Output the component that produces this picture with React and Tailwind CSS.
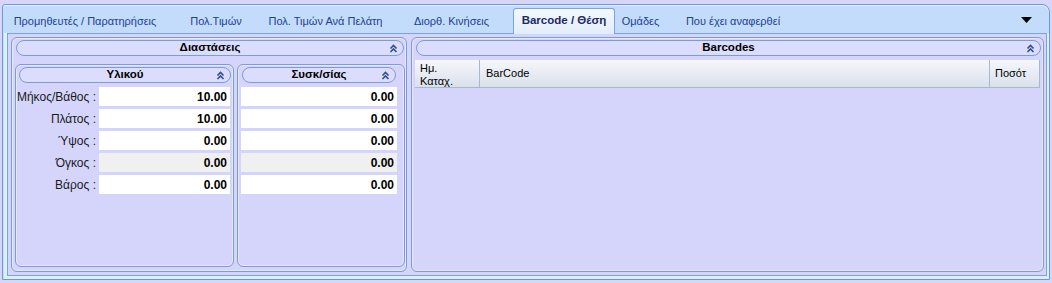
import React from "react";

const font = { fontFamily: '"Liberation Sans", Arial, sans-serif' };

function Chevrons() {
  return (
    <svg width="9" height="9" viewBox="0 0 9 9" className="shrink-0">
      <path d="M1.5 4.5 L4.5 1.5 L7.5 4.5" fill="none" stroke="#2f4f8f" strokeWidth="1.6" />
      <path d="M1.5 8 L4.5 5 L7.5 8" fill="none" stroke="#2f4f8f" strokeWidth="1.6" />
    </svg>
  );
}

function Pill({ title, className = "" }) {
  return (
    <div
      className={`h-[16px] rounded-full border border-[#7c9cd4] bg-[#dcdcfc] flex items-center relative ${className}`}
    >
      <div className="flex-1 text-center text-[11.5px] font-bold text-black leading-none">{title}</div>
      <div className="absolute right-[5px] top-[3px]">
        <Chevrons />
      </div>
    </div>
  );
}

const tabs = [
  { t: "Προμηθευτές / Παρατηρήσεις", w: "w-[162px]" },
  { t: "Πολ.Τιμών", w: "w-[100px]" },
  { t: "Πολ. Τιμών Ανά Πελάτη", w: "w-[119px] mr-[5px]" },
  { t: "Διορθ. Κινήσεις", w: "w-[123px]" },
  { t: "Barcode / Θέση", w: "w-[102px]", sel: true },
  { t: "Ομάδες", w: "w-[51px]" },
  { t: "Που έχει αναφερθεί", w: "w-[134px]" },
];

const labels = ["Μήκος/Βάθος :", "Πλάτος :", "Ύψος :", "Όγκος :", "Βάρος :"];
const v1 = ["10.00", "10.00", "0.00", "0.00", "0.00"];
const v2 = ["0.00", "0.00", "0.00", "0.00", "0.00"];

export default function App() {
  return (
    <div
      style={font}
      className="w-[1052px] h-[283px] bg-[#d6d6f8] pt-[4px] px-[2px] overflow-hidden"
    >
      <div className="h-[276px] border border-[#6f98d8] rounded-tr-[8px] rounded-tl-[3px] bg-[#c4dcfc] flex flex-col shadow-[inset_0_1px_0_#e8f2ff]">
        {/* tab strip */}
        <div className="h-[28px] flex items-end pl-[1px] shrink-0">
          {tabs.map((tab) =>
            tab.sel ? (
              <div
                key={tab.t}
                className={`${tab.w} h-[26px] -mb-[1px] relative z-10 rounded-t-[3px] border border-b-0 border-[#7ea2da] bg-gradient-to-b from-[#f4f8fe] to-[#e2edfc] flex items-center justify-center pb-[1px] text-[11.5px] font-bold text-[#1c2a66]`}
              >
                {tab.t}
              </div>
            ) : (
              <div
                key={tab.t}
                className={`${tab.w} h-[25px] flex items-center justify-center pt-[2px] text-[11px] text-[#23408e] whitespace-nowrap`}
              >
                {tab.t}
              </div>
            )
          )}
          <div className="ml-auto mr-[17px] self-center pt-[2px]">
            <svg width="11" height="7" viewBox="0 0 11 7">
              <path d="M0 0 L11 0 L5.5 6 Z" fill="#000" />
            </svg>
          </div>
        </div>

        {/* content */}
        <div className="flex-1 ml-[1px] border-l-[3px] border-r-[2px] border-b-[3px] border-[#dcf0fc] flex">
          <div className="flex-1 border border-[#7ea2da] bg-[#d5d5fc] pt-[3px] pb-[3px] pl-[3px] pr-[2px] flex gap-[4px]">
            {/* Διαστάσεις */}
            <div className="w-[396px] shrink-0 rounded-[6px] border border-[#7c9cd4] shadow-[inset_0_0_0_1px_#e6e6ff] pt-[2px] pl-[4px] pr-[1px] pb-[4px] flex flex-col">
              <Pill title="Διαστάσεις" className="mr-[1px]" />
              <div className="flex-1 mt-[8px] -ml-[1px] flex gap-[3px]">
                {/* Υλικού */}
                <div className="w-[219px] shrink-0 rounded-[6px] border border-[#7c9cd4] shadow-[inset_0_0_0_1px_#e6e6ff] pt-[2px] pl-[3px] pr-[2px] flex flex-col">
                  <Pill title="Υλικού" className="w-[212px]" />
                  <div className="mt-[4px] flex flex-col gap-[3px]">
                    {labels.map((l, i) => (
                      <div key={l} className="flex items-center h-[19px]">
                        <div className="w-[80px] -ml-[3px] text-right text-[12px] text-[#1a1a1a] whitespace-nowrap">
                          {l}
                        </div>
                        <div
                          className={`ml-[3px] w-[131px] h-[19px] flex items-center justify-end pr-[3px] text-[12px] font-bold text-black ${
                            i === 3 ? "bg-[#f0f0f0]" : "bg-white"
                          }`}
                        >
                          {v1[i]}
                        </div>
                      </div>
                    ))}
                  </div>
                </div>
                {/* Συσκ/σίας */}
                <div className="w-[168px] shrink-0 rounded-[6px] border border-[#7c9cd4] shadow-[inset_0_0_0_1px_#e6e6ff] pt-[2px] pl-[3px] flex flex-col">
                  <Pill title="Συσκ/σίας" className="w-[154px] ml-[1px]" />
                  <div className="mt-[4px] flex flex-col gap-[3px]">
                    {v2.map((v, i) => (
                      <div
                        key={i}
                        className={`w-[156px] h-[19px] flex items-center justify-end pr-[3px] text-[12px] font-bold text-black ${
                          i === 3 ? "bg-[#f0f0f0]" : "bg-white"
                        }`}
                      >
                        {v}
                      </div>
                    ))}
                  </div>
                </div>
              </div>
            </div>

            {/* Barcodes */}
            <div className="flex-1 rounded-[6px] border border-[#7c9cd4] shadow-[inset_0_0_0_1px_#e6e6ff] pt-[2px] pl-[4px] pr-[2px] flex flex-col">
              <Pill title="Barcodes" />
              <div className="mt-[4px] -ml-[1px] mr-[1px] h-[28px] flex border-b border-[#a6b8d2] bg-gradient-to-b from-[#f5f7fb] to-[#dae1eb] text-[11px] text-black">
                <div className="w-[65px] border-r border-[#a6b8d2] pl-[5px] pt-[2px] leading-[13px]">
                  Ημ.
                  <br />
                  Καταχ.
                </div>
                <div className="flex-1 border-r border-[#a6b8d2] pl-[6px] flex items-center">BarCode</div>
                <div className="w-[50px] border-r border-[#a6b8d2] pl-[5px] flex items-center">Ποσότ</div>
              </div>
            </div>
          </div>
        </div>
      </div>
    </div>
  );
}
